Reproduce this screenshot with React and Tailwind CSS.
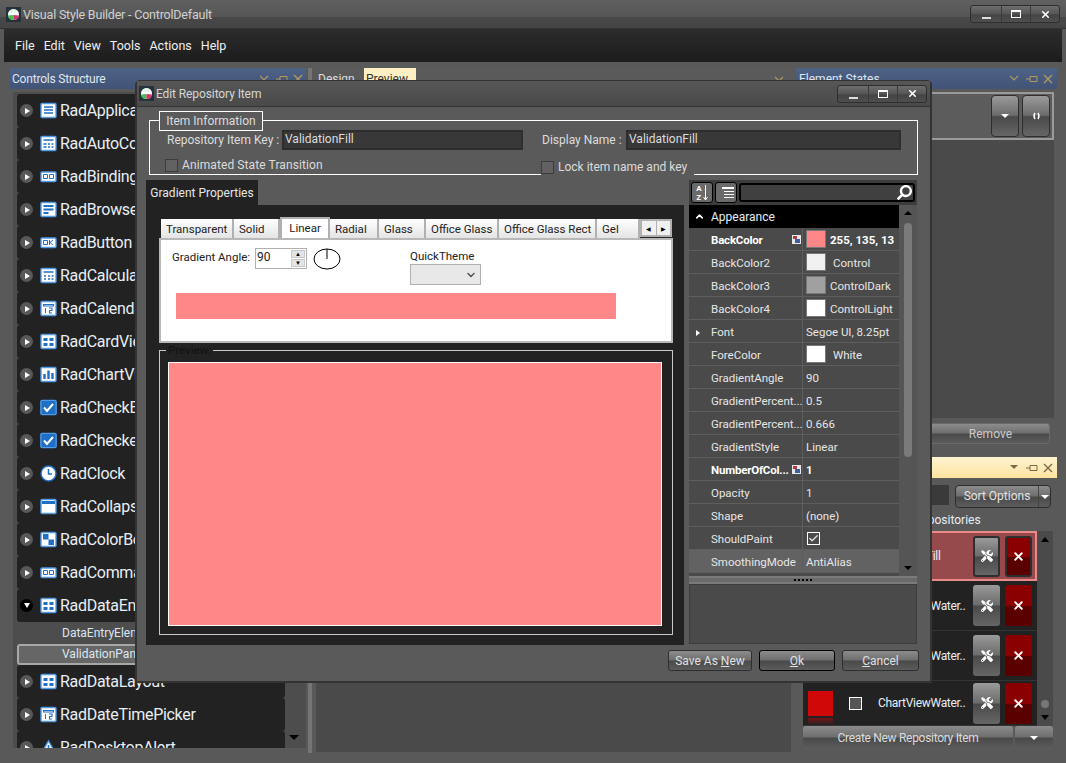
import React from 'react';
import { FaTools, FaSearch } from 'react-icons/fa';
import { X, Check, ChevronDown } from 'lucide-react';

const controls = [
  ['RadApplicationMenu', 'menu'],
  ['RadAutoComplete', 'grid'],
  ['RadBindingNavigator', 'nav'],
  ['RadBrowseEditor', 'browse'],
  ['RadButton', 'ok'],
  ['RadCalculator', 'calc'],
  ['RadCalendar', 'cal'],
  ['RadCardView', 'card'],
  ['RadChartView', 'chart'],
  ['RadCheckBox', 'check'],
  ['RadCheckedDropDown', 'check'],
  ['RadClock', 'clock'],
  ['RadCollapsiblePanel', 'panel'],
  ['RadColorBox', 'color'],
  ['RadCommandBar', 'nav'],
];

const props = [
  { name: 'BackColor', value: '255, 135, 13', swatch: '#ff8787', bold: true, flag: true },
  { name: 'BackColor2', value: 'Control', swatch: '#f0f0f0', indent: true },
  { name: 'BackColor3', value: 'ControlDark', swatch: '#a0a0a0' },
  { name: 'BackColor4', value: 'ControlLight', swatch: '#ffffff' },
  { name: 'Font', value: 'Segoe UI, 8.25pt', caret: true },
  { name: 'ForeColor', value: 'White', swatch: '#ffffff', indent: true },
  { name: 'GradientAngle', value: '90' },
  { name: 'GradientPercent...', value: '0.5' },
  { name: 'GradientPercent...', value: '0.666' },
  { name: 'GradientStyle', value: 'Linear' },
  { name: 'NumberOfCol...', value: '1', bold: true, flag: true },
  { name: 'Opacity', value: '1' },
  { name: 'Shape', value: '(none)' },
  { name: 'ShouldPaint', check: true },
  { name: 'SmoothingMode', value: 'AntiAlias', selected: true },
];

const gradientTabs = [
  ['Transparent', 'w-[73px]'],
  ['Solid', 'w-[46px]'],
  ['Linear', 'w-[50px]'],
  ['Radial', 'w-[49px]'],
  ['Glass', 'w-[47px]'],
  ['Office Glass', 'w-[73px]'],
  ['Office Glass Rect', 'w-[98px]'],
  ['Gel', 'w-[43px]'],
];

const glossy = 'bg-[linear-gradient(#8c8c8c,#6e6e6e_48%,#494949_52%,#5c5c5c)]';
const tallGlossy = 'bg-[linear-gradient(#9a9a9a,#6c6c6c_48%,#4a4a4a_52%,#666666)]';

function Logo() {
  return (
    <svg width="15" height="15" viewBox="0 0 15 15" className="shrink-0">
      <rect width="15" height="15" fill="#26323a" />
      <circle cx="7.5" cy="7.5" r="5.5" fill="#ffffff" />
      <path d="M2 8.5a5.5 5.5 0 0 0 5.5 4.5V8z" fill="#3fbf4c" />
      <path d="M13 8.5a5.5 5.5 0 0 1-5.5 4.5V8z" fill="#d6306e" />
      <path d="M5 3a5 5 0 0 1 5 0v3H5z" fill="#dff5e6" />
    </svg>
  );
}

function WindowButtons({ className }) {
  return (
    <div className={`flex h-[18px] w-[90px] overflow-hidden rounded-[3px] border border-[#2e2e2e] bg-[linear-gradient(#6e6e6e,#555555_50%,#444444_55%,#4f4f4f)] ${className}`}>
      <div className="flex w-[31px] items-end justify-center border-r border-[#3a3a3a] pb-[3px]">
        <div className="h-[2px] w-[9px] bg-[#dddddd]" />
      </div>
      <div className="flex w-[29px] items-center justify-center border-r border-[#3a3a3a]">
        <div className="h-[8px] w-[10px] border border-t-2 border-white" />
      </div>
      <div className="flex flex-1 items-center justify-center">
        <X size={11} strokeWidth={3.5} color="#ffffff" />
      </div>
    </div>
  );
}

function ControlIcon({ type }) {
  const blue = '#1f6fc4';
  if (type === 'alert') {
    return (
      <svg width="17" height="17" viewBox="0 0 17 17" className="shrink-0">
        <path d="M8.5 2L16 15H1z" fill="#fff" stroke="#4f9be8" strokeWidth="1.4" />
        <path d="M8.5 6v5M6 13h5" stroke={blue} strokeWidth="1.6" />
      </svg>
    );
  }
  return (
    <svg width="17" height="17" viewBox="0 0 17 17" className="shrink-0">
      {type === 'clock' ? (
        <>
          <circle cx="8.5" cy="8.5" r="7.5" fill="#fff" stroke={blue} strokeWidth="1.5" />
          <path d="M8.5 4v5h3.5" fill="none" stroke={blue} strokeWidth="1.5" />
        </>
      ) : (
        <rect x="1" y={type === 'ok' || type === 'nav' ? 4 : 1.5} width="15" height={type === 'ok' || type === 'nav' ? 9.5 : 14} rx="1" fill="#fff" stroke="#4f9be8" strokeWidth="1.4" />
      )}
      {type === 'menu' && <path d="M4 5h9M4 8h9M4 11h9" stroke={blue} strokeWidth="1.6" />}
      {type === 'grid' && <path d="M3.5 5h10M3.5 9h3M8 9h2M11.5 9h2M3.5 12h3M8 12h2M11.5 12h2" stroke={blue} strokeWidth="1.6" />}
      {type === 'nav' && <path d="M3.5 6.5h4v4h-4zM9.5 6.5h4v4h-4z" fill="none" stroke={blue} />}
      {type === 'browse' && <path d="M3.5 5h10M3.5 8.5h10M3.5 12h5" stroke={blue} strokeWidth="1.8" />}
      {type === 'ok' && <path d="M3.5 6.5h4v4h-4zM9.5 6v5M13 6l-3 2.5 3 2.5" fill="none" stroke={blue} />}
      {type === 'calc' && <path d="M3.5 5h10M4 9h2M8 9h2M11.5 9h2M4 12h2M8 12h2M11.5 12h2" stroke={blue} strokeWidth="1.7" />}
      {type === 'cal' && <path d="M3.5 4.5h10v1.5h-10zM5.5 8v5M9 8h3v2.5H9.5V13H12" fill="none" stroke={blue} strokeWidth="1.1" />}
      {type === 'card' && <path d="M3.5 5h4v3h-4zM9.5 5h4v3h-4zM3.5 10h4v3h-4zM9.5 10h4v3h-4z" fill={blue} />}
      {type === 'chart' && <path d="M4.5 13V8M8.5 13V4.5M12.5 13V7" stroke={blue} strokeWidth="2.4" />}
      {type === 'check' && (
        <>
          <rect x="1" y="1.5" width="15" height="14" rx="1" fill={blue} stroke="#4f9be8" />
          <path d="M4 8.5l3 3.5 6-7" fill="none" stroke="#fff" strokeWidth="2" />
        </>
      )}
      {type === 'panel' && <path d="M2 3h13v3H2z" fill={blue} />}
      {type === 'color' && <path d="M3 3h5.5v5.5H3zM8.5 8.5H14V14H8.5z" fill={blue} />}
    </svg>
  );
}

function TreeRow({ label, icon, open }) {
  return (
    <div className="flex h-[33px] shrink-0 items-center rounded-[3px] bg-[#222222] pl-[3px]">
      <div className={`flex h-[13px] w-[13px] shrink-0 items-center justify-center rounded-full ${open ? 'bg-black' : 'bg-[#585858]'}`}>
        {open ? (
          <div className="h-0 w-0 border-x-[3px] border-t-[5px] border-x-transparent border-t-white" />
        ) : (
          <div className="ml-[1px] h-0 w-0 border-y-[3px] border-l-[5px] border-y-transparent border-l-white" />
        )}
      </div>
      <div className="ml-[7px] flex w-[20px] shrink-0">
        <ControlIcon type={icon} />
      </div>
      <span className="whitespace-nowrap text-[16px] tracking-[-0.3px] text-[#e8eef5]">{label}</span>
    </div>
  );
}

function PanelGlyphs({ color = '#b39a5c', filled }) {
  return (
    <svg width="43" height="10" viewBox="0 0 43 10" className="shrink-0">
      {filled ? <path d="M0 2h8l-4 4z" fill={color} /> : <path d="M0 2l4 4 4-4" fill="none" stroke={color} strokeWidth="1.2" />}
      <path d="M16 5h4M20 2.5h7v5h-7z" fill="none" stroke={color} />
      <path d="M34 1l8 8M42 1l-8 8" fill="none" stroke={color} strokeWidth="1.4" />
    </svg>
  );
}

function LeftPanel() {
  return (
    <div className="flex w-[296px] shrink-0 flex-col">
      <div className="flex h-[21px] shrink-0 items-center justify-between bg-[linear-gradient(#4e6286,#415478)] pl-[2px] pr-[3px] pt-[1px]">
        <span className="text-[12px] tracking-[-0.2px] text-[#dfe6f0]">Controls Structure</span>
        <PanelGlyphs />
      </div>
      <div className="ml-[3px] mt-[3px] flex h-[656px] overflow-hidden bg-[#4d4d4d] pl-[4px] pt-[2px]">
        <div className="flex w-[268px] shrink-0 flex-col overflow-hidden">
          {controls.map(([label, icon]) => (
            <TreeRow key={label} label={label} icon={icon} />
          ))}
          <TreeRow label="RadDataEntry" icon="card" open />
          <div className="h-[22px] shrink-0 pl-[45px] text-[12px] leading-[22px] text-[#dce6f0]">DataEntryElement</div>
          <div className="h-[21px] shrink-0 rounded-[3px] border-2 border-[#a8a8a8] bg-[#666666] pl-[43px] text-[12px] leading-[17px] text-[#dce6f0]">ValidationPanel</div>
          <TreeRow label="RadDataLayout" icon="card" />
          <TreeRow label="RadDateTimePicker" icon="cal" />
          <TreeRow label="RadDesktopAlert" icon="alert" />
        </div>
        <div className="flex flex-1 items-end justify-center pb-[8px] pr-[3px]">
          <div className="h-0 w-0 border-x-[5px] border-t-[5px] border-x-transparent border-t-black" />
        </div>
      </div>
    </div>
  );
}

function CenterPanel() {
  return (
    <div className="ml-[4px] flex w-[475px] shrink-0 flex-col">
      <div className="flex h-[21px] shrink-0 items-center bg-[#5a5a5a] pl-[2px] pr-[3px]">
        <span className="w-[46px] pt-[1px] text-[12px] text-[#dddddd]">Design</span>
        <span className="h-full w-[52px] bg-[#fdefc4] pl-[2px] text-[12px] leading-[22px] text-[#333333]">Preview</span>
        <svg width="8" height="6" viewBox="0 0 8 6" className="ml-auto mr-[5px]"><path d="M0 1l4 4 4-4" fill="none" stroke="#b39a5c" strokeWidth="1.2" /></svg>
      </div>
      <div className="mt-[3px] h-[660px] bg-[#4a4a4a]" />
    </div>
  );
}

function ToolButton({ red, framed }) {
  return (
    <div className={`flex h-[41px] w-[27px] items-center justify-center rounded-[3px] ${framed ? 'border-2 border-[#2e2e2e]' : ''} ${red ? 'bg-[linear-gradient(#8a0000_50%,#5a0000_52%)]' : tallGlossy}`}>
      {red ? <X size={13} strokeWidth={3.5} color="#ffffff" /> : <FaTools size={12} color="#ffffff" />}
    </div>
  );
}

function RepoRow({ label, selected, short }) {
  return (
    <div className={`flex shrink-0 items-center ${short ? 'h-[45px]' : 'h-[50px]'} ${selected ? 'bg-[#964a4c] ring-2 ring-inset ring-[#e88a8a]' : 'border-b border-[#333333] bg-[#222222]'}`}>
      <div className={`relative ml-[5px] h-[25px] w-[25px] shrink-0 bg-[#d10808] ${selected ? 'opacity-0' : ''}`}>
        <div className="absolute left-0 top-[27px] h-[7px] w-full bg-[linear-gradient(#7a1414,#222222)]" />
      </div>
      <div className={`ml-[16px] h-[13px] w-[13px] shrink-0 border border-white bg-[#555555] ${selected ? 'opacity-0' : ''}`} />
      <span className={`${selected ? 'ml-[14px] w-[90px]' : 'ml-[16px] w-[88px]'} shrink-0 overflow-hidden whitespace-nowrap text-[12px] tracking-[-0.3px] text-[#e8eef5]`}>{label}</span>
      <div className="ml-[7px] flex gap-[5px]">
        <ToolButton framed={selected} />
        <ToolButton red framed={selected} />
      </div>
    </div>
  );
}

function RightPanel() {
  return (
    <div className="ml-[5px] flex w-[261px] shrink-0 flex-col">
      <div className="flex h-[21px] shrink-0 items-center justify-between bg-[linear-gradient(#4e6286,#415478)] pl-[3px] pr-[4px] pt-[1px]">
        <span className="text-[12px] text-[#dfe6f0]">Element States</span>
        <PanelGlyphs />
      </div>
      <div className="mr-[3px] mt-[3px] flex h-[48px] items-center justify-end gap-[3px] border-2 border-[#9a9a9a] bg-[#5c5c5c] pr-[2px]">
        <div className={`flex h-[42px] w-[28px] items-center justify-center rounded-[4px] border border-[#2e2e2e] ${tallGlossy}`}>
          <div className="h-0 w-0 border-x-[4px] border-t-[4px] border-x-transparent border-t-white" />
        </div>
        <div className={`flex h-[42px] w-[28px] items-center justify-center rounded-[4px] border border-[#2e2e2e] ${tallGlossy}`}>
          <svg width="9" height="8" viewBox="0 0 9 8"><path d="M3 1Q1 4 3 7M6 1Q8 4 6 7" fill="none" stroke="#ffffff" strokeWidth="1.5" /></svg>
        </div>
      </div>
      <div className="mr-[3px] h-[278px] bg-[#4a4a4a]" />
      <div className={`mr-[7px] mt-[5px] flex h-[21px] items-center justify-end rounded-[3px] border border-[#6a6a6a] pr-[37px] text-[12px] text-[#c9c9c9] ${glossy}`}>Remove</div>
      <div className="mt-[13px] flex h-[21px] shrink-0 items-center justify-end bg-[linear-gradient(#fff3cf,#fde3a0)] pr-[4px]">
        <PanelGlyphs color="#7a6a48" filled />
      </div>
      <div className="mt-[7px] flex h-[23px] justify-end pr-[6px]">
        <div className="mr-[6px] h-[20px] w-[60px] bg-[#3a3a3a]" />
        <div className={`flex w-[96px] rounded-[4px] border border-[#2e2e2e] text-[12px] text-[#e4e4e4] ${glossy}`}>
          <span className="flex-1 text-center leading-[21px]">Sort Options</span>
          <div className="flex w-[12px] items-center justify-center border-l border-[#444444]">
            <div className="h-0 w-0 border-x-[4px] border-t-[4px] border-x-transparent border-t-white" />
          </div>
        </div>
      </div>
      <div className="h-[23px] pl-[118px] text-[12px] leading-[24px] text-[#e8eef5]">Repositories</div>
      <div className="ml-[7px] flex h-[195px] w-[250px]">
        <div className="flex w-[234px] flex-col overflow-hidden">
          <RepoRow label="ValidationFill" selected />
          <RepoRow label="ChartViewWater..." />
          <RepoRow label="ChartViewWater..." />
          <RepoRow label="ChartViewWater..." short />
        </div>
        <div className="relative flex flex-1 flex-col items-center justify-between bg-[#4a4a4a] py-[6px]">
          <div className="h-0 w-0 border-x-[4px] border-b-[5px] border-x-transparent border-b-black" />
          <div className="absolute bottom-[18px] h-[8px] w-[8px] rounded-full bg-[#777777]" />
          <div className="h-0 w-0 border-x-[4px] border-t-[5px] border-x-transparent border-t-black" />
        </div>
      </div>
      <div className="ml-[7px] flex h-[23px] w-[250px] gap-[2px]">
        <div className={`flex w-[210px] items-center justify-center rounded-[3px] text-[12px] tracking-[-0.3px] text-[#dcdcdc] ${glossy}`}>Create New Repository Item</div>
        <div className={`flex flex-1 items-center justify-center rounded-[3px] ${glossy}`}>
          <div className="h-0 w-0 border-x-[4px] border-t-[4px] border-x-transparent border-t-white" />
        </div>
      </div>
    </div>
  );
}

function Swatch({ color }) {
  return <div className="h-[18px] w-[20px] shrink-0 border border-[#777777]" style={{ backgroundColor: color }} />;
}

function Flag() {
  return (
    <svg width="9" height="9" viewBox="0 0 9 9" className="absolute right-[1px] top-[7px]">
      <rect width="9" height="9" fill="#e8e8e8" />
      <rect x="1" y="1" width="4" height="3" fill="#a84040" />
      <rect x="3" y="4" width="5" height="4" fill="#3f5f9f" />
    </svg>
  );
}

function PropRow({ row }) {
  return (
    <div className={`flex h-[23px] shrink-0 border-b border-[#5e5e5e] text-[11.5px] text-[#e6e6e6] ${row.selected ? 'bg-[#626262]' : ''}`}>
      <div className={`relative flex w-[114px] shrink-0 items-center border-r border-[#5e5e5e] pl-[22px] pt-[3px] ${row.bold ? 'font-bold tracking-[-0.2px] text-white' : ''}`}>
        {row.caret && <div className="absolute left-[7px] h-0 w-0 border-y-[3px] border-l-[4px] border-y-transparent border-l-white" />}
        <span className="whitespace-nowrap">{row.name}</span>
        {row.flag && <Flag />}
      </div>
      <div className="flex flex-1 items-center overflow-hidden whitespace-nowrap pl-[3px]">
        {row.swatch && <Swatch color={row.swatch} />}
        {row.check ? (
          <div className="ml-[1px] flex h-[13px] w-[13px] items-center justify-center border border-white">
            <Check size={11} strokeWidth={3} color="#dddddd" />
          </div>
        ) : (
          <span className={`pt-[3px] ${row.swatch ? (row.indent ? 'ml-[7px]' : 'ml-[4px]') : ''} ${row.bold ? 'font-bold text-white' : ''}`}>{row.value}</span>
        )}
      </div>
    </div>
  );
}

function PropertyGrid() {
  return (
    <div className="ml-[5px] flex w-[228px] shrink-0 flex-col">
      <div className="flex h-[25px] items-center gap-[2px] bg-[#3c3c3c] px-[2px]">
        <div className="flex h-[21px] w-[22px] items-center justify-center gap-[1px] rounded-[3px] border border-black bg-[#6a6a6a] text-[8px] font-bold leading-[9px] text-white">
          <div className="flex flex-col">
            <span>A</span>
            <span>Z</span>
          </div>
          <svg width="5" height="16" viewBox="0 0 5 16"><path d="M2.5 0v15M0.5 12l2 3 2-3" fill="none" stroke="#ffffff" /></svg>
        </div>
        <div className="flex h-[21px] w-[22px] flex-col items-center justify-center gap-[2px] rounded-[3px] border border-black bg-[#6a6a6a]">
          <div className="ml-[4px] h-[2px] w-[12px] bg-white" />
          <div className="ml-[6px] h-[1px] w-[10px] bg-white" />
          <div className="ml-[6px] h-[1px] w-[10px] bg-white" />
          <div className="ml-[6px] h-[1px] w-[10px] bg-white" />
        </div>
        <div className="flex h-[19px] flex-1 items-center justify-end rounded-[3px] border-2 border-black bg-[#404040] pr-[1px]">
          <FaSearch size={15} color="#ffffff" className="-scale-x-100" />
        </div>
      </div>
      <div className="flex h-[371px] bg-[#4a4a4a]">
        <div className="flex w-[210px] flex-col overflow-hidden">
          <div className="flex h-[23px] shrink-0 items-center bg-black text-[12px] text-[#e6eef8]">
            <ChevronDown size={11} strokeWidth={3.5} color="#ffffff" className="ml-[5px] mr-[6px] rotate-180" />
            <span>Appearance</span>
          </div>
          {props.map((row, i) => (
            <PropRow key={i} row={row} />
          ))}
        </div>
        <div className="flex flex-1 flex-col items-center bg-[#555555] pt-[6px]">
          <div className="h-0 w-0 border-x-[4px] border-b-[4px] border-x-transparent border-b-black" />
          <div className="mt-[8px] h-[234px] w-[8px] rounded-[4px] bg-[#7a7a7a]" />
          <div className="mb-[6px] mt-auto h-0 w-0 border-x-[4px] border-t-[4px] border-x-transparent border-t-black" />
        </div>
      </div>
      <div className="flex h-[8px] items-center justify-center border-y-2 border-[#7a7a7a] bg-[#6a6a6a]">
        <div className="h-[2px] w-[18px] border-b-2 border-dotted border-black" />
      </div>
      <div className="h-[60px] border border-[#3c3c3c] bg-[#4a4a4a]" />
    </div>
  );
}

function GradientPanel() {
  return (
    <div className="flex w-[538px] shrink-0 flex-col">
      <div className="flex h-[25px] w-[112px] items-center justify-center bg-[#222222] pt-[1px] text-[12px] text-[#e6e6e6]">Gradient Properties</div>
      <div className="flex h-[440px] flex-col bg-[#222222] pl-[13px] pr-[11px] pt-[14px]">
        <div className="flex h-[19px] items-end pl-[2px]">
          {gradientTabs.map(([label, w]) =>
            label === 'Linear' ? (
              <div key={label} className={`relative z-10 flex h-[21px] ${w} items-center justify-center border-x-2 border-t-2 border-[#b0b0b0] bg-white text-[11.5px] text-[#222222]`}>{label}</div>
            ) : (
              <div key={label} className={`flex h-[19px] ${w} items-center whitespace-nowrap border-r-2 border-[#b0b0b0] bg-[linear-gradient(#ffffff,#e4e4e4)] pl-[5px] pt-[2px] text-[11.5px] text-[#222222]`}>{label}</div>
            )
          )}
          <div className="flex h-[18px] w-[32px] self-start border-2 border-[#b0b0b0] bg-[#f0f0f0] text-[6px] text-black">
            <span className="flex flex-1 items-center justify-center border-r border-[#b0b0b0]">◀</span>
            <span className="flex flex-1 items-center justify-center">▶</span>
          </div>
        </div>
        <div className="h-[105px] w-[514px] border-2 border-[#b8b8b8] bg-white">
          <div className="flex h-[53px] text-[11.5px] text-[#222222]">
            <span className="ml-[11px] mt-[9px] w-[83px] whitespace-nowrap">Gradient Angle:</span>
            <div className="mt-[8px] flex h-[21px] w-[52px] border border-[#b0b0b0] pl-[1px] text-[12px] leading-[17px]">
              <span className="flex-1">90</span>
              <div className="m-[1px] flex w-[14px] flex-col gap-[1px] text-[6px] leading-[8px] text-black">
                <span className="flex-1 border border-[#c8c8c8] bg-[#e4e4e4] text-center leading-[6px]">▲</span>
                <span className="flex-1 border border-[#c8c8c8] bg-[#e4e4e4] text-center leading-[6px]">▼</span>
              </div>
            </div>
            <svg width="28" height="22" viewBox="0 0 28 22" className="ml-[6px] mt-[8px]">
              <ellipse cx="14" cy="11" rx="13" ry="10" fill="none" stroke="#000000" />
              <path d="M14 1v10" stroke="#000000" />
            </svg>
            <div className="ml-[69px] mt-[9px]">
              <div className="leading-[15px]">QuickTheme</div>
              <div className="flex h-[21px] w-[71px] items-center justify-end border border-[#b0b0b0] bg-[#e8e8e8] pr-[3px]">
                <ChevronDown size={12} strokeWidth={3} color="#555555" />
              </div>
            </div>
          </div>
          <div className="ml-[15px] h-[26px] w-[440px] bg-[#ff8787]" />
        </div>
        <div className="relative mt-[7px] h-[285px] w-[514px] border border-[#c8c8c8] p-[11px_10px_8px_8px]">
          <span className="absolute left-[6px] top-[-8px] bg-[#222222] px-[2px] text-[11.5px] leading-[14px] text-[#111111]">Preview:</span>
          <div className="h-full border border-white bg-[#ff8787]" />
        </div>
      </div>
    </div>
  );
}

function DialogButton({ label, mnemonic, rest, width, dark }) {
  return (
    <div className={`flex h-[21px] ${width} items-center justify-center whitespace-pre rounded-[3px] border ${dark ? 'border-black' : 'border-[#2e2e2e]'} text-[12px] text-[#e0e0e0] ${glossy}`}>
      {label}
      <span className="underline">{mnemonic}</span>
      {rest}
    </div>
  );
}

function RepositoryDialog() {
  return (
    <div className="absolute left-[135px] top-[80px] flex h-[603px] w-[797px] flex-col rounded-t-[5px] border-x-2 border-b-2 border-t border-[#333333] bg-[#5a5a5a]">
      <div className="flex h-[26px] shrink-0 items-center border-b border-[#333333] bg-[linear-gradient(#565656,#4a4a4a)] pl-[2px]">
        <Logo />
        <span className="ml-[2px] text-[12px] tracking-[-0.1px] text-[#d6d6d6]">Edit Repository Item</span>
        <WindowButtons className="ml-auto mr-[3px]" />
      </div>
      <div className="relative ml-[12px] mt-[13px] h-[55px] w-[769px] shrink-0 border border-white text-[12px] text-[#dcdcdc]">
        <div className="absolute left-[9px] top-[-10px] flex h-[20px] w-[104px] items-center justify-center border border-white bg-[#5a5a5a]">Item Information</div>
        <div className="flex items-center pt-[9px]">
          <span className="ml-[17px] w-[115px] whitespace-nowrap">Repository Item Key :</span>
          <div className="h-[20px] w-[241px] border-2 border-[#2e2e2e] bg-[#383838] pl-[1px] leading-[15px]">ValidationFill</div>
          <span className="ml-[19px] w-[84px] whitespace-nowrap">Display Name :</span>
          <div className="h-[20px] w-[275px] border-2 border-[#2e2e2e] bg-[#383838] pl-[1px] leading-[15px]">ValidationFill</div>
        </div>
        <div className="ml-[15px] mt-[6px] flex items-center">
          <div className="h-[13px] w-[13px] border border-[#3c3c3c] bg-[#626262]" />
          <span className="ml-[4px] tracking-[0.1px]">Animated State Transition</span>
        </div>
        <div className="absolute left-[391px] top-[36px] flex h-[20px] w-[153px] items-center bg-[#5a5a5a]">
          <div className="h-[13px] w-[13px] border border-[#3c3c3c] bg-[#626262]" />
          <span className="ml-[4px] whitespace-nowrap">Lock item name and key</span>
        </div>
      </div>
      <div className="ml-[9px] mt-[5px] flex">
        <GradientPanel />
        <PropertyGrid />
      </div>
      <div className="mt-[5px] flex justify-end gap-[7px] pr-[11px]">
        <DialogButton label="Save As " mnemonic="N" rest="ew" width="w-[84px]" />
        <DialogButton label="" mnemonic="O" rest="k" width="w-[76px]" dark />
        <DialogButton label="" mnemonic="C" rest="ancel" width="w-[77px]" />
      </div>
    </div>
  );
}

export default function App() {
  return (
    <div className="relative flex h-[763px] w-[1066px] flex-col overflow-hidden bg-[#595959] [font-family:Roboto,'Open_Sans',sans-serif]">
      <div className="flex h-[29px] shrink-0 items-center border-b border-[#333333] bg-[linear-gradient(#606060_0%,#565656_60%,#484848_62%,#444444)] pl-[6px]">
        <Logo />
        <span className="ml-[2px] pt-[3px] text-[12.5px] tracking-[-0.2px] text-[#d0d0d0]">Visual Style Builder - ControlDefault</span>
        <WindowButtons className="ml-auto mr-[6px]" />
      </div>
      <div className="mx-[4px] flex h-[33px] shrink-0 items-center gap-[9px] bg-[linear-gradient(#2c2c2c,#1c1c1c)] pl-[11px] pt-[2px] text-[12.5px] text-[#f0f0f0]">
        <span>File</span>
        <span>Edit</span>
        <span>View</span>
        <span>Tools</span>
        <span>Actions</span>
        <span>Help</span>
      </div>
      <div className="mt-[6px] flex pl-[10px]">
        <LeftPanel />
        <div className="ml-[2px] h-[685px] w-[4px] shrink-0 bg-[#757575]" />
        <CenterPanel />
        <RightPanel />
      </div>
      <RepositoryDialog />
    </div>
  );
}
